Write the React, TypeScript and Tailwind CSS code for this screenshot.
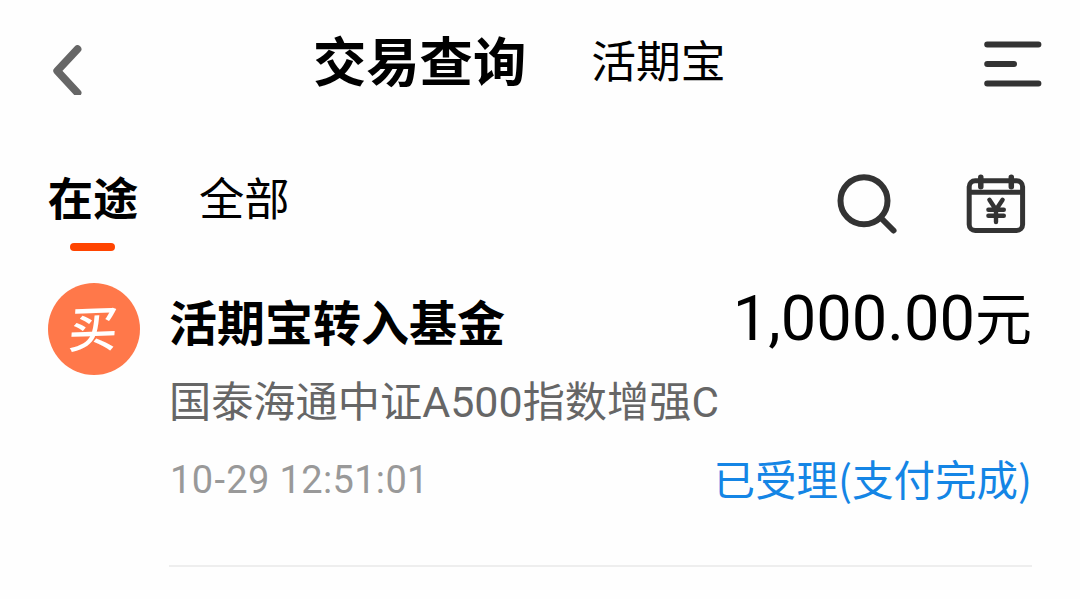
function BackIcon() {
  return (
    <svg className="block h-[50px] w-8" viewBox="0 0 32 50" fill="none">
      <path d="M27.5 4.2 7.2 25.8 27.5 47.8" stroke="#666" strokeWidth="7.8" strokeLinecap="round" strokeLinejoin="round" />
    </svg>
  );
}

function MenuIcon() {
  return (
    <svg className="block h-12 w-[58px]" viewBox="0 0 58 48" fill="none">
      <path d="M3.2 4.4h51.2M3.2 24h26.8M3.2 43.4h51.2" stroke="#333" strokeWidth="6" strokeLinecap="round" />
    </svg>
  );
}

function SearchIcon() {
  return (
    <svg className="block h-16 w-16" viewBox="0 0 64 64" fill="none" stroke="#333" strokeWidth="6">
      <circle cx="28" cy="28.7" r="23.5" />
      <path d="m45.5 46.5 12 12" strokeLinecap="round" />
    </svg>
  );
}

function CalendarIcon() {
  return (
    <svg className="block h-16 w-16" viewBox="0 0 64 64" fill="none" stroke="#333" strokeWidth="5">
      <rect x="5.2" y="8.8" width="53.4" height="49.6" rx="6" />
      <path d="M5.2 20.3h53.4" />
      <path d="M16.8 5.2v9.6M47.3 5.2v9.6" strokeWidth="5.5" strokeLinecap="round" />
      <path d="m25.4 27.8 6.6 10 6.6-10M24.4 37.8h15.4M24.4 43.8h15.4M32 37.8v12.2" strokeWidth="4.4" strokeLinecap="round" strokeLinejoin="round" />
    </svg>
  );
}

export default function App() {
  return (
    <main className="h-[599px] w-[1080px] overflow-hidden bg-[#fefefe] font-['Noto_Sans_CJK_SC',sans-serif] whitespace-nowrap text-black">
      <header className="flex h-[118px] items-center pr-[38px] pl-[50px]">
        <button className="mt-[22px] w-[263px]" aria-label="返回">
          <BackIcon />
        </button>
        <h1 className="text-[53.3px] leading-[118px] font-bold">交易查询</h1>
        <span className="ml-[65px] text-[44.8px] leading-[116px]">活期宝</span>
        <button className="mt-[10px] ml-auto" aria-label="菜单">
          <MenuIcon />
        </button>
      </header>

      <nav className="flex h-[165px] items-start pr-[52px] pl-12 pt-12">
        <div className="flex w-[90px] flex-col items-center">
          <span className="text-[45.3px] leading-[60px] font-bold">在途</span>
          <span className="mt-[17px] mr-[2px] h-2 w-[45px] rounded-full bg-[#ff4400]" />
        </div>
        <span className="ml-[61px] text-[45.3px] leading-[60px]">全部</span>
        <div className="mt-[6px] ml-auto flex gap-[64px]">
          <SearchIcon />
          <CalendarIcon />
        </div>
      </nav>

      <section className="flex pr-12 pl-12">
        <div className="flex h-[92px] w-[92px] items-center justify-center rounded-full bg-[#ff784a]">
          <span className="mb-[8px] -skew-x-6 -rotate-2 text-[49px] leading-none font-medium text-white">买</span>
        </div>
        <div className="ml-[29px] h-[284px] flex-1 border-b-2 border-[#eee]">
          <div className="flex h-[76px] items-start justify-between">
            <h2 className="text-[48px] leading-[75px] font-bold">活期宝转入基金</h2>
            <p className="font-['Roboto','Noto_Sans_CJK_SC',sans-serif] text-[63.2px] leading-[70px]">
              1,000.00<span className="text-[57px]">元</span>
            </p>
          </div>
          <p className="font-['Roboto','Noto_Sans_CJK_SC',sans-serif] text-[42.2px] leading-[86px] text-[#666]">
            国泰海通中证<span className="text-[43px]">A500</span>指数增强C
          </p>
          <div className="flex h-[68px] items-start justify-between">
            <time className="pl-px font-['Roboto',sans-serif] text-[38px] leading-[68px] tracking-[0.35px] text-[#999]">10<span className="mx-px">-</span>29 12:51:01</time>
            <span className="text-[41.5px] leading-[64px] text-[#1485e5]">已受理(支付完成)</span>
          </div>
        </div>
      </section>
    </main>
  );
}
